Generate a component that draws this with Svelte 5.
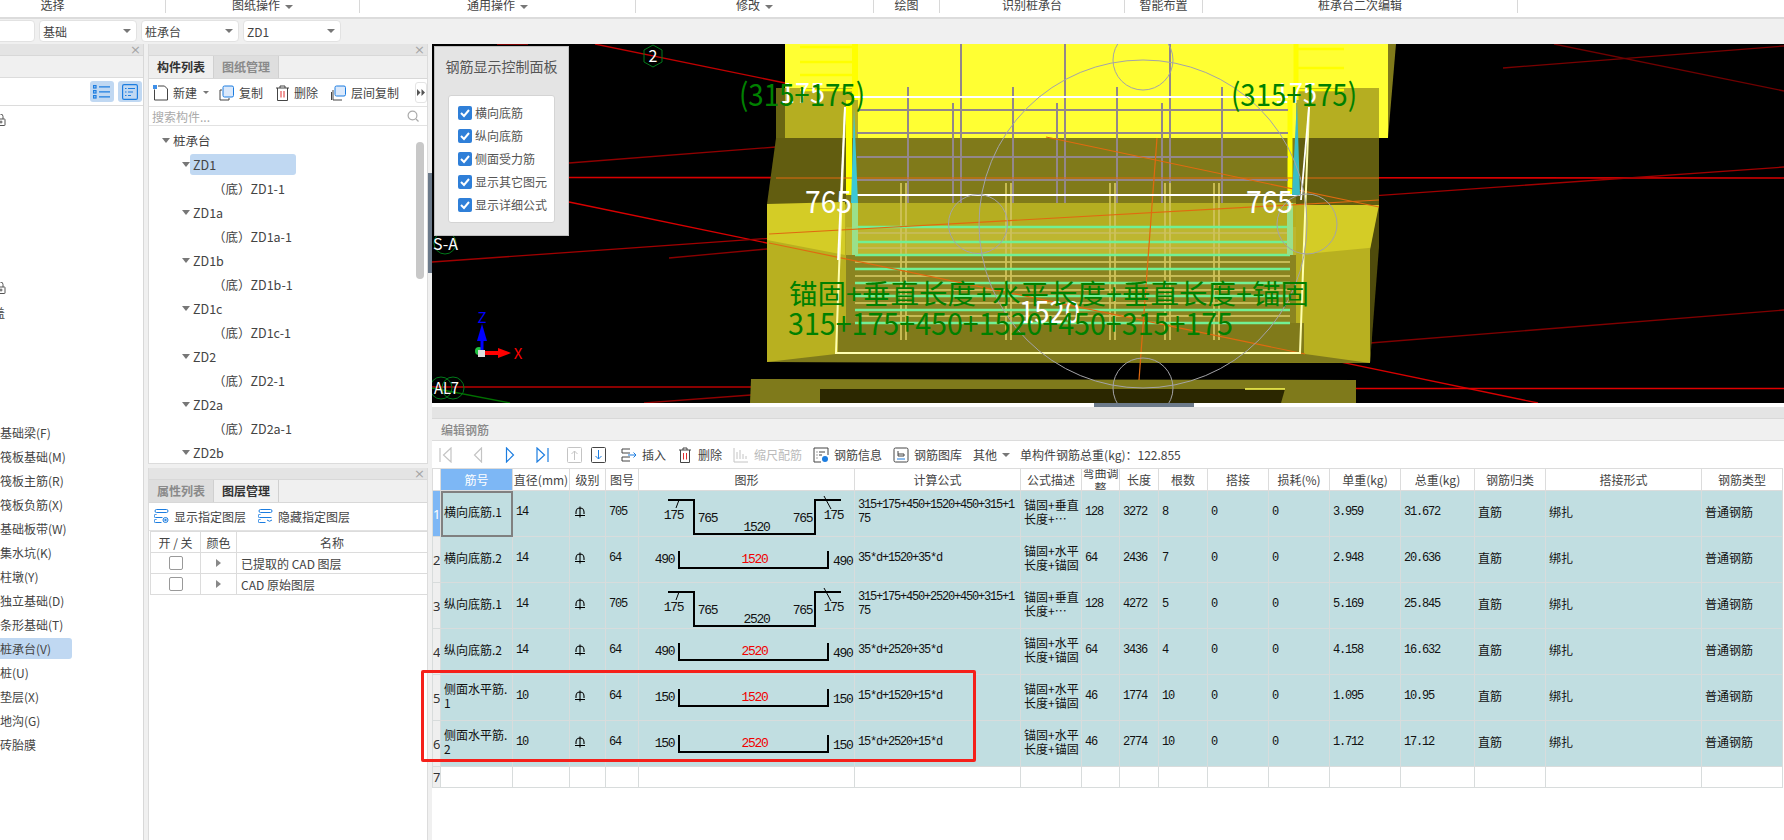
<script>
  const ribbon = [
    { label: '选择', cls: 'first' },
    { label: '图纸操作', caret: true, cls: 'w194' },
    { label: '通用操作', caret: true, cls: 'w276' },
    { label: '修改', caret: true, cls: 'w238' },
    { label: '绘图', cls: 'w66' },
    { label: '识别桩承台', cls: 'w185' },
    { label: '智能布置', cls: 'w78' },
    { label: '桩承台二次编辑', cls: 'w315' }
  ];

  // left list, one entry per row, empty rows are collapsed groups scrolled out to the left
  const navRows = [
    { lock: true }, {}, {}, {}, {}, {}, {},
    { lock: true }, { clip: '盖' }, {}, {}, {}, {},
    { text: '基础梁(F)' }, { text: '筏板基础(M)' }, { text: '筏板主筋(R)' }, { text: '筏板负筋(X)' },
    { text: '基础板带(W)' }, { text: '集水坑(K)' }, { text: '柱墩(Y)' }, { text: '独立基础(D)' },
    { text: '条形基础(T)' }, { text: '桩承台(V)', active: true }, { text: '桩(U)' }, { text: '垫层(X)' },
    { text: '地沟(G)' }, { text: '砖胎膜' }
  ];

  const treeItems = ['ZD1', 'ZD1a', 'ZD1b', 'ZD1c', 'ZD2', 'ZD2a', 'ZD2b'];

  const columns = [
    { w: 8, t: '' }, { w: 72, t: '筋号', cls: 'hd-active' }, { w: 57, t: '直径(mm)' }, { w: 36, t: '级别' }, { w: 33, t: '图号' },
    { w: 216, t: '图形' }, { w: 166, t: '计算公式' }, { w: 61, t: '公式描述' }, { w: 38, t: '弯曲调整', wrap: true },
    { w: 39, t: '长度' }, { w: 49, t: '根数' }, { w: 61, t: '搭接' }, { w: 61, t: '损耗(%)' }, { w: 71, t: '单重(kg)' },
    { w: 74, t: '总重(kg)' }, { w: 71, t: '钢筋归类' }, { w: 156, t: '搭接形式' }, { w: 81, t: '钢筋类型' }
  ];

  const rebars = [
    { name: ['横向底筋.1'], d: 14, no: 705, hook: true, mid: 1520, side: 175, formula: '315+175+450+1520+450+315+175', desc: ['锚固+垂直', '长度+…'], bend: 128, len: 3272, n: 8, unit: '3.959', total: '31.672' },
    { name: ['横向底筋.2'], d: 14, no: 64, mid: 1520, side: 490, formula: '35*d+1520+35*d', desc: ['锚固+水平', '长度+锚固'], bend: 64, len: 2436, n: 7, unit: '2.948', total: '20.636' },
    { name: ['纵向底筋.1'], d: 14, no: 705, hook: true, mid: 2520, side: 175, formula: '315+175+450+2520+450+315+175', desc: ['锚固+垂直', '长度+…'], bend: 128, len: 4272, n: 5, unit: '5.169', total: '25.845' },
    { name: ['纵向底筋.2'], d: 14, no: 64, mid: 2520, side: 490, formula: '35*d+2520+35*d', desc: ['锚固+水平', '长度+锚固'], bend: 64, len: 3436, n: 4, unit: '4.158', total: '16.632' },
    { name: ['侧面水平筋.', '1'], d: 10, no: 64, mid: 1520, side: 150, formula: '15*d+1520+15*d', desc: ['锚固+水平', '长度+锚固'], bend: 46, len: 1774, n: 10, unit: '1.095', total: '10.95' },
    { name: ['侧面水平筋.', '2'], d: 10, no: 64, mid: 2520, side: 150, formula: '15*d+2520+15*d', desc: ['锚固+水平', '长度+锚固'], bend: 46, len: 2774, n: 10, unit: '1.712', total: '17.12' }
  ];

  const checks = ['横向底筋', '纵向底筋', '侧面受力筋', '显示其它图元', '显示详细公式'];

  const rebarV = [[908, 87], [953, 103], [961, 44], [1013, 87], [1057, 103], [1065, 44], [1117, 87], [1162, 103], [1170, 44], [1222, 87]];
  const rebarH = [110, 133, 157, 180];
  const lowerV = [901, 906, 1006, 1011, 1110, 1115, 1165, 1170, 1214, 1219];
  const green = [227, 242, 255, 269, 283, 296, 310, 323];
  const tan = [233, 248, 262, 276, 290, 303, 316];
</script>

<div class="page">
  <header class="ribbon">
    {#each ribbon as r}
      <div class="rb {r.cls}">
        <span>{r.label}</span>
        {#if r.caret}<i class="caret"></i>{/if}
      </div>
    {/each}
  </header>

  <div class="combos">
    <div class="combo c0"><i class="caret"></i></div>
    <div class="combo"><span>基础</span><i class="caret"></i></div>
    <div class="combo"><span>桩承台</span><i class="caret"></i></div>
    <div class="combo"><span>ZD1</span><i class="caret"></i></div>
  </div>

  <main class="main">
    <aside class="panel nav">
      <div class="p-head"><span class="close">×</span></div>
      <div class="nav-strip"></div>
      <div class="nav-tools">
        <button class="view-btn" aria-label="列表">
          <svg width="18" height="14" viewBox="0 0 18 14" fill="none" stroke="#1c7de0" stroke-width="1.2">
            <rect x="0.6" y="0.6" width="2.4" height="2.4" /><rect x="0.6" y="5.6" width="2.4" height="2.4" /><rect x="0.6" y="10.6" width="2.4" height="2.4" />
            <path d="M6 1.8h11M6 6.8h11M6 11.8h11" />
          </svg>
        </button>
        <button class="view-btn" aria-label="详情">
          <svg width="16" height="16" viewBox="0 0 16 16" fill="none" stroke="#1c7de0" stroke-width="1.2">
            <rect x="0.6" y="0.6" width="14.8" height="14.8" rx="1.5" />
            <path d="M3 4.5h1.5M6 4.5h7M3 8h1.5M6 8h5M3 11.5h1.5M6 11.5h3" />
          </svg>
        </button>
      </div>
      <ul class="nav-list">
        {#each navRows as row}
          <li class="nav-row">
            {#if row.lock}
              <svg class="lock" width="6" height="12" viewBox="0 0 6 12" fill="none" stroke="#555" stroke-width="1">
                <path d="M-2 5V2.5a2.5 2.5 0 0 1 5 0V5" /><rect x="-4" y="5" width="9" height="6.5" rx="0.5" /><circle cx="1" cy="8" r="1" />
              </svg>
            {:else if row.clip}
              <span class="nav-clip">{row.clip}</span>
            {:else if row.text}
              <span class="nav-text" class:active={row.active}>{row.text}</span>
            {/if}
          </li>
        {/each}
      </ul>
    </aside>

    <div class="mid">
      <section class="panel comp">
        <div class="p-head"><span class="close">×</span></div>
        <div class="tabs">
          <div class="tab on">构件列表</div>
          <div class="tab">图纸管理</div>
        </div>
        <div class="tools">
          <span class="tool">
            <svg width="15" height="16" viewBox="0 0 15 16" fill="none" stroke="#444">
              <path d="M1.5 4.5v10.5h13V4l-3-3H5" />
              <rect x="0" y="0" width="4" height="4" fill="#3f8fe8" stroke="none" />
            </svg>
            新建<i class="caret new-caret"></i>
          </span>
          <span class="tool">
            <svg width="15" height="16" viewBox="0 0 15 16" fill="none">
              <path d="M3 5H1v10h9v-2" stroke="#444" />
              <rect x="4" y="1" width="10.5" height="11" rx="1.5" fill="#dbe9fb" stroke="#1c7de0" />
            </svg>
            复制
          </span>
          <span class="tool trash">
            <svg width="13" height="16" viewBox="0 0 13 16" fill="none" stroke="#444">
              <path d="M0 3h13M4 3V1h5v2M1.5 3v12.5h10V3" />
              <path d="M5 6v6.5M8 6v6.5" stroke="#e03030" />
            </svg>
            删除
          </span>
          <span class="tool">
            <svg width="15" height="16" viewBox="0 0 15 16" fill="none">
              <path d="M2 5v10h9M0.5 7v8" stroke="#444" />
              <rect x="4" y="1" width="10.5" height="10" rx="1.5" fill="#dbe9fb" stroke="#1c7de0" />
            </svg>
            层间复制
          </span>
          <span class="more">
            <svg width="8" height="7" viewBox="0 0 8 7" fill="#555"><path d="M0 0l3.500 3.500L0 7zM4.500 0L8 3.500 4.500 7z" /></svg>
          </span>
        </div>
        <div class="search">
          <span>搜索构件...</span>
          <svg width="12" height="12" viewBox="0 0 12 12" fill="none" stroke="#aaa" stroke-width="1.2">
            <circle cx="5.5" cy="5.5" r="4.4" /><path d="M9 9l2.5 2.5" />
          </svg>
        </div>
        <div class="tree">
          <div class="t-row lvl0"><i class="arrow"></i><span>桩承台</span></div>
          {#each treeItems as item, i}
            <div class="t-row lvl1"><i class="arrow"></i><span class:sel={i === 0}>{item}</span></div>
            {#if i < treeItems.length - 1}
              <div class="t-row lvl2">（底）{item}-1</div>
            {/if}
          {/each}
          <div class="scroll"></div>
        </div>
      </section>

      <section class="panel layers">
        <div class="p-head"><span class="close">×</span></div>
        <div class="tabs">
          <div class="tab">属性列表</div>
          <div class="tab on">图层管理</div>
        </div>
        <div class="tools layer-tools">
          <span class="tool">
            <svg width="15" height="15" viewBox="0 0 15 15" fill="none" stroke="#1c7de0">
              <rect x="1" y="0.5" width="13" height="3" rx="1.5" /><path d="M2.5 5.5h-1a1.5 1.5 0 0 0 0 3h7M2.5 10.500h-1a1.500 1.500 0 0 0 0 3h6" />
              <circle cx="11.500" cy="11" r="2.500" /><circle cx="11.500" cy="11" r="0.800" fill="#1c7de0" />
            </svg>
            显示指定图层
          </span>
          <span class="tool hide">
            <svg width="15" height="15" viewBox="0 0 15 15" fill="none" stroke="#1c7de0">
              <rect x="1" y="0.5" width="13" height="3" rx="1.5" /><path d="M2.5 5.5h-1a1.5 1.5 0 0 0 0 3h12M2.5 10.500h-1a1.500 1.500 0 0 0 0 3h6M9 11q2.500 2.500 5 0" />
            </svg>
            隐藏指定图层
          </span>
        </div>
        <table class="layer-table">
          <colgroup><col class="l1" /><col class="l2" /><col /></colgroup>
          <thead><tr><th>开 / 关</th><th>颜色</th><th>名称</th></tr></thead>
          <tbody>
            {#each ['已提取的 CAD 图层', 'CAD 原始图层'] as name}
              <tr>
                <td><i class="cb"></i></td>
                <td><i class="tri"></i></td>
                <td class="l-name">{name}</td>
              </tr>
            {/each}
          </tbody>
        </table>
      </section>
      <i class="split-v"></i>
    </div>

    <div class="right">
      <div class="view">
        <svg class="scene" width="1352" height="359" viewBox="432 44 1352 359">
          <rect x="432" y="44" width="1352" height="359" fill="#000" />

          <!-- grid lines behind the model -->
          <g fill="none" stroke-width="1.3">
            <path d="M595 44L785 83" stroke="#c00000" />
            <path d="M497 44L528 44" stroke="#c00000" />
            <path d="M569 163L776 147" stroke="#900000" />
            <path d="M1503 68L1784 46" stroke="#7a0000" />
            <path d="M1554 44L1784 91" stroke="#700000" />
            <path d="M569 177.500L1784 178" stroke="#d80000" stroke-width="1.600" />
            <path d="M569 202L1538 403" stroke="#d80000" />
            <path d="M432 262L1784 167" stroke="#a00000" />
            <path d="M669 258L767 249" stroke="#8a0000" />
            <path d="M1370 343L1784 310" stroke="#800000" />
            <path d="M432 387L751 387" stroke="#b80000" stroke-width="1.600" />
            <path d="M1356 388.500L1784 388.500" stroke="#e00000" stroke-width="1.600" />
            <path d="M644 403L751 395" stroke="#900000" />
            <path d="M432 388L510 403" stroke="#007000" />
          </g>

          <!-- pile cap volumes -->
          <polygon points="751,379 1356,380 1356,403 750,403" fill="#7f7a1b" />
          <polygon points="820,389 1285,389 1281,403 820,403" fill="#2b2700" />
          <path d="M1245 389H1285" stroke="#ffff55" stroke-width="1.500" fill="none" />
          <polygon points="785,44 1388,44 1388,138 785,138" fill="#ffff33" />
          <polygon points="1388,44 1396,44 1388,138" fill="#807a1a" />
          <polygon points="776,88 785,88 785,138 776,138" fill="#6a6612" />
          <polygon points="785,88 1379,88 1379,138 785,138" fill="#b5ae21" />
          <polygon points="858,44 1296,44 1296,138 858,138" fill="#ffff33" />
          <polygon points="776,138 1379,138 1379,205 767,204" fill="#625d10" />
          <polygon points="767,204 1379,205 1370,363 767,362" fill="#b8b020" />
          <polygon points="767,204 845,202 845,255 767,240" fill="#d4cc26" />
          <polygon points="1305,205 1379,205 1379,247 1305,254" fill="#d4cc26" />
          <polygon points="1379,205 1379,247 1370,363 1370,250" fill="#4f4b0c" />
          <polygon points="767,362 836,354 1305,354 1370,363" fill="#7f7a1b" />
          <rect x="846" y="138" width="450" height="65" fill="#807a1a" />
          <rect x="846" y="203" width="450" height="24" fill="#b5ae21" />
          <rect x="846" y="227" width="450" height="28" fill="#bdb630" />
          <rect x="846" y="255" width="450" height="68" fill="#8a8420" />
          <rect x="838" y="323" width="466" height="31" fill="#807a1a" />

          <!-- pure yellow hooks -->
          <g fill="none" stroke="#ffff00">
            <path d="M855 44V100" stroke-width="6" />
            <path d="M849 100V195" stroke-width="6" />
            <path d="M1296 44V100" stroke-width="5" />
            <path d="M1290 100V195" stroke-width="5" />
            <path d="M800 47H852M800 62H852M800 75H852M800 90H852" stroke-width="2.500" />
            <path d="M1296 49H1344M1296 68H1344M1296 90H1344" stroke-width="2.500" />
          </g>

          <!-- gray rebar grid -->
          <g stroke="#93878a" stroke-width="2" fill="none">
            {#each rebarH as y}
              <path d="M857 {y}H1288" />
            {/each}
            {#each rebarV as [x, top]}
              <path d="M{x} {top}V203" />
            {/each}
          </g>

          <!-- lower bars -->
          <g fill="none">
            {#each tan as y}
              <path d="M855 {y}H1290" stroke="#c5bb55" stroke-width="2" />
            {/each}
            {#each lowerV as x}
              <path d="M{x} 183V340" stroke="#cfc25a" stroke-width="1.800" />
            {/each}
            {#each green as y}
              <path d="M855 {y}H1290" stroke="#72f094" stroke-width="2.500" />
            {/each}
            <path d="M855 203V255" stroke="#9ae08a" stroke-width="6" />
            <path d="M1290 203V255" stroke="#9ae08a" stroke-width="6" />
          </g>

          <!-- orange where the axes cross the model -->
          <g fill="none" stroke="#e06a10" stroke-width="1.200">
            <path d="M1046 137L1379 207" />
            <path d="M769 243L1305 354" />
            <path d="M769 234L1379 200" />
            <path d="M776 178H1379" />
            <path d="M1157 138L1139 380" />
          </g>

          <!-- white frame -->
          <path d="M845 107L836 353H1300L1309 107" fill="none" stroke="#ffffb0" stroke-width="2" />
          <g fill="none" stroke="#fff" stroke-width="1.800">
            <path d="M854 97H1288" />
            <path d="M852 195H1300" />
            <path d="M845 107L838 260" />
            <path d="M1309 107L1301 200" />
          </g>
          <path d="M854 107L858 203H851Z" fill="#3cc8d4" />
          <path d="M1297 100L1300 195H1292Z" fill="#3cbcc4" />

          <!-- column circles -->
          <g fill="none" stroke="#a3a3a8" stroke-width="1">
            <circle cx="1143" cy="224" r="164" />
            <circle cx="1143" cy="60" r="30" />
            <circle cx="1143" cy="388" r="30" />
            <circle cx="978" cy="224" r="29.500" />
            <circle cx="1307" cy="224" r="30" />
          </g>

          <!-- axis labels -->
          <g fill="none" stroke="#007a1a">
            <polygon points="653,45 662,50 662,62 653,67 644,62 644,50" />
            <circle cx="445" cy="243" r="11" />
            <circle cx="441" cy="388" r="11" />
            <circle cx="453" cy="388" r="11" />
          </g>
          <text class="axis" x="653" y="62" text-anchor="middle">2</text>
          <text class="axis" x="433" y="250">S-A</text>
          <text class="axis" x="434" y="394" textLength="25" lengthAdjust="spacingAndGlyphs">AL7</text>

          <!-- gizmo -->
          <circle cx="479" cy="351" r="4" fill="#20c040" />
          <path d="M482 351V331" stroke="#0000ff" stroke-width="3" fill="none" />
          <polygon points="482,324 487,341 477,341" fill="#0000ff" />
          <path d="M484 353H500" stroke="#ff0000" stroke-width="4" fill="none" />
          <polygon points="511,353 498,348 498,358" fill="#ff0000" />
          <rect x="478" y="350" width="7" height="7" fill="#ddd" />
          <text class="gz" x="482" y="323" fill="#0000ff" text-anchor="middle">Z</text>
          <text class="gz" x="518" y="359" fill="#ff0000" text-anchor="middle">X</text>

          <!-- dimension text -->
          <g class="w-dim">
            <text x="780" y="103" textLength="45" lengthAdjust="spacingAndGlyphs">175</text>
            <text x="1275" y="103" textLength="42" lengthAdjust="spacingAndGlyphs">175</text>
            <text class="big" x="805" y="213" textLength="47" lengthAdjust="spacingAndGlyphs">765</text>
            <text class="big" x="1246" y="213" textLength="47" lengthAdjust="spacingAndGlyphs">765</text>
            <text class="big" x="1019" y="323" textLength="61" lengthAdjust="spacingAndGlyphs">1520</text>
          </g>
          <g class="g-dim">
            <text class="g-num" x="739" y="106" textLength="126" lengthAdjust="spacingAndGlyphs">(315+175)</text>
            <text class="g-num" x="1231" y="106" textLength="126" lengthAdjust="spacingAndGlyphs">(315+175)</text>
            <text x="789" y="304" textLength="520" lengthAdjust="spacingAndGlyphs">锚固+垂直长度+水平长度+垂直长度+锚固</text>
            <text class="g-num" x="788" y="335" textLength="445" lengthAdjust="spacingAndGlyphs">315+175+450+1520+450+315+175</text>
          </g>
        </svg>

        <div class="ctl">
          <div class="ctl-title">钢筋显示控制面板</div>
          <div class="ctl-box">
            {#each checks as c}
              <label class="ctl-row">
                <svg width="14" height="14" viewBox="0 0 14 14">
                  <rect width="14" height="14" rx="2" fill="#2f7fd8" />
                  <path d="M3 7l3 3 5-6" fill="none" stroke="#fff" stroke-width="2" />
                </svg>
                {c}
              </label>
            {/each}
          </div>
        </div>
        <i class="split-h"></i>
      </div>

      <section class="editor">
        <div class="ed-band"></div>
        <div class="ed-title">编辑钢筋</div>
        <div class="ed-tools">
          <span class="nv first-nv">
            <svg width="14" height="16" viewBox="0 0 14 16" fill="none" stroke="#c4c4c4" stroke-width="1.200"><path d="M1 1v14M12 1L4.500 8 12 15z" /></svg>
          </span>
          <span class="nv">
            <svg width="10" height="16" viewBox="0 0 10 16" fill="none" stroke="#c4c4c4" stroke-width="1.200"><path d="M8.500 1L1.500 8l7 7z" /></svg>
          </span>
          <span class="nv">
            <svg width="10" height="16" viewBox="0 0 10 16" fill="none" stroke="#1c7de0" stroke-width="1.200"><path d="M1.500 1l7 7-7 7z" /></svg>
          </span>
          <span class="nv">
            <svg width="14" height="16" viewBox="0 0 14 16" fill="none" stroke="#1c7de0" stroke-width="1.200"><path d="M13 1v14M2 1l7.500 7L2 15z" /></svg>
          </span>
          <span class="nv">
            <svg width="15" height="16" viewBox="0 0 15 16" fill="none" stroke="#c4c4c4"><rect x="0.500" y="0.500" width="14" height="15" rx="1" /><path d="M7.500 13V4M4.500 7l3-3 3 3" /></svg>
          </span>
          <span class="nv dn">
            <svg width="15" height="16" viewBox="0 0 15 16" fill="none"><rect x="0.500" y="0.500" width="14" height="15" rx="1" stroke="#444" /><path d="M7.500 3v9M4.500 9l3 3 3-3" stroke="#1c7de0" /></svg>
          </span>
          <span class="et ins">
            <svg width="16" height="14" viewBox="0 0 16 14" fill="none" stroke="#444"><path d="M9 1H1v4h8M9 9H1v4h8" /><path d="M7 7h8M12.500 4.500L15 7l-2.500 2.500" stroke="#1c7de0" /></svg>
            插入
          </span>
          <span class="et">
            <svg width="16" height="16" viewBox="0 0 16 16" fill="none" stroke="#444"><path d="M2 3h12M6 3V1h4v2M3.500 3v12.500h9V3" /><path d="M6.500 6v6.500M9.500 6v6.500" stroke="#e03030" /></svg>
            删除
          </span>
          <span class="et off">
            <svg width="16" height="16" viewBox="0 0 16 16" fill="none" stroke="#c4c4c4"><path d="M1 1v14h14M4 5v7M7 3v9M10 7v5M13 9v3" /></svg>
            缩尺配筋
          </span>
          <span class="et">
            <svg width="16" height="16" viewBox="0 0 16 16" fill="none" stroke="#444"><path d="M15 8V1H1v14h7" /><path d="M3.500 5h1M6 5h6M3.500 8h1M6 8h3M3.500 11h1" /><circle cx="12" cy="12" r="3" fill="#1c7de0" stroke="none" /></svg>
            钢筋信息
          </span>
          <span class="et">
            <svg width="16" height="16" viewBox="0 0 16 16" fill="none" stroke="#444"><rect x="1" y="1" width="14" height="14" rx="1.500" /><path d="M5 4v5h6v-2H5" /><path d="M4 12h8" stroke="#1c7de0" /></svg>
            钢筋图库
          </span>
          <span class="et other">其他<i class="caret"></i></span>
          <span class="weight">单构件钢筋总重(kg)：122.855</span>
        </div>

        <table class="grid">
          <colgroup>
            {#each columns as c}<col width={c.w} />{/each}
          </colgroup>
          <thead>
            <tr>
              {#each columns as c}
                <th class={c.cls}><div class="th-in" class:wrap={c.wrap}>{c.t}</div></th>
              {/each}
            </tr>
          </thead>
          <tbody>
            {#each rebars as r, i}
              <tr class="data">
                <td class="rn" class:cur={i === 0}>{i + 1}</td>
                <td class="txt" class:edit={i === 0}>
                  {#each r.name as line}<div>{line}</div>{/each}
                </td>
                <td class="num">{r.d}</td>
                <td class="lv">
                  <svg width="10" height="12" viewBox="0 0 10 12" fill="none" stroke="#000" stroke-width="1.100">
                    <path d="M1 8V6a4 4 0 0 1 8 0v2M0 9.500h10M5 0.500v11" />
                  </svg>
                </td>
                <td class="num">{r.no}</td>
                <td class="shape">
                  <svg width="216" height="45" viewBox="0 0 216 45">
                    {#if r.hook}
                      <path d="M29 9H55V43H176V9H202" fill="none" stroke="#000" stroke-width="2" />
                      <path d="M40 9L37 17M185 5L192 18" fill="none" stroke="#000" />
                      <text x="34.500" y="28" text-anchor="middle">{r.side}</text>
                      <text x="68.500" y="31" text-anchor="middle">765</text>
                      <text x="117.500" y="40" text-anchor="middle">{r.mid}</text>
                      <text x="163.500" y="31" text-anchor="middle">765</text>
                      <text x="194.600" y="28" text-anchor="middle">{r.side}</text>
                    {:else}
                      <path d="M40 14V31H189V14" fill="none" stroke="#000" stroke-width="2" />
                      <text x="25.400" y="26" text-anchor="middle">{r.side}</text>
                      <text class="red" x="115.400" y="26" text-anchor="middle">{r.mid}</text>
                      <text x="203.700" y="28" text-anchor="middle">{r.side}</text>
                    {/if}
                  </svg>
                </td>
                <td class="num formula">{r.formula}</td>
                <td class="txt">{#each r.desc as line}<div>{line}</div>{/each}</td>
                <td class="num">{r.bend}</td>
                <td class="num">{r.len}</td>
                <td class="num">{r.n}</td>
                <td class="num">0</td>
                <td class="num">0</td>
                <td class="num">{r.unit}</td>
                <td class="num">{r.total}</td>
                <td class="txt">直筋</td>
                <td class="txt">绑扎</td>
                <td class="txt">普通钢筋</td>
              </tr>
            {/each}
            <tr class="blank">
              <td class="rn">7</td>
              {#each columns.slice(1) as _}<td></td>{/each}
            </tr>
          </tbody>
        </table>
      </section>
    </div>
  </main>

  <div class="mark"></div>
</div>

<style>
  :global(body) {
    margin: 0;
    background: #f0f0f0;
  }
  .page {
    position: relative;
    width: 1784px;
    height: 840px;
    overflow: hidden;
    background: #f0f0f0;
    font: 12px "Noto Sans CJK SC", "Noto Sans", sans-serif;
    color: #333;
  }
  i {
    display: block;
    font-style: normal;
  }
  .caret {
    width: 0;
    height: 0;
    border: 4px solid transparent;
    border-top: 4px solid #777;
    border-bottom: 0;
  }

  /* ribbon */
  .ribbon {
    display: flex;
    height: 17px;
    background: #fff;
    border-bottom: 2px solid #dcdcdc;
    overflow: hidden;
  }
  .rb {
    display: flex;
    justify-content: center;
    align-items: center;
    gap: 5px;
    height: 13px;
    box-sizing: border-box;
    border-right: 1px solid #d8d8d8;
    line-height: 11px;
    color: #444;
  }
  .rb span {
    position: relative;
    top: -2px;
  }
  .first { width: 166px; padding-right: 60px; }
  .w194 { width: 194px; }
  .w276 { width: 276px; }
  .w238 { width: 238px; }
  .w66 { width: 66px; }
  .w185 { width: 185px; }
  .w78 { width: 78px; }
  .w315 { width: 315px; }

  /* combo row */
  .combos {
    display: flex;
    gap: 4px;
    height: 22px;
    padding-top: 1px;
    margin-bottom: 2px;
    margin-left: -63px;
  }
  .combo {
    display: flex;
    align-items: center;
    justify-content: space-between;
    width: 98px;
    box-sizing: border-box;
    height: 22px;
    padding: 0 5px 0 3px;
    background: #fff;
    border: 1px solid #e2e2e2;
    border-radius: 4px;
    font-size: 12px;
    color: #444;
  }

  /* main area */
  .main {
    display: flex;
    height: 796px;
  }
  .panel {
    background: #fff;
    box-sizing: border-box;
  }
  .nav {
    width: 144px;
    flex: none;
    border-right: 1px solid #d8d8d8;
    overflow: hidden;
  }
  .p-head {
    display: flex;
    justify-content: flex-end;
    align-items: center;
    height: 11px;
    padding-right: 2px;
    background: #e4e4e4;
    border-bottom: 1px solid #d8d8d8;
  }
  .close {
    color: #a5a5a5;
    font: 13px/11px "DejaVu Sans", sans-serif;
  }
  .nav-strip {
    height: 21px;
    background: #f0f0f0;
    border-bottom: 1px solid #dcdcdc;
  }
  .nav-tools {
    display: flex;
    justify-content: flex-end;
    align-items: center;
    gap: 4px;
    height: 27px;
    padding-right: 1px;
    border-bottom: 1px solid #dcdcdc;
  }
  .view-btn {
    display: flex;
    align-items: center;
    justify-content: center;
    width: 24px;
    height: 21px;
    padding: 0;
    background: #c0d8f2;
    border: 0;
    border-radius: 3px;
  }
  .nav-list {
    margin: 0;
    padding: 2px 0 0;
    list-style: none;
  }
  .nav-row {
    display: flex;
    align-items: center;
    height: 24px;
    white-space: nowrap;
    font-size: 12px;
    color: #444;
  }
  .nav-text {
    display: block;
    line-height: 21px;
  }
  .nav-text.active {
    width: 72px;
    background: #c0d8f2;
    border-radius: 0 3px 3px 0;
  }
  .nav-clip {
    margin-left: -7px;
  }

  .mid {
    position: relative;
    display: flex;
    flex-direction: column;
    gap: 4px;
    width: 280px;
    margin: 0 4px;
    flex: none;
  }
  .comp {
    height: 420px;
    border: 1px solid #dcdcdc;
    border-top: 0;
  }
  .layers {
    flex: 1;
    border: 1px solid #dcdcdc;
    border-top: 0;
    border-bottom: 0;
  }
  .tabs {
    display: flex;
    height: 22px;
    background: #f0f0f0;
    border-bottom: 1px solid #d8d8d8;
  }
  .tab {
    width: 65px;
    box-sizing: border-box;
    text-align: center;
    line-height: 22px;
    background: #dedede;
    color: #8a8a8a;
    border-right: 1px solid #d0d0d0;
    font-weight: 700;
  }
  .tab.on {
    background: #efefef;
    color: #333;
  }
  .tools {
    display: flex;
    align-items: center;
    height: 27px;
    padding-left: 4px;
    border-bottom: 1px solid #e2e2e2;
    color: #444;
  }
  .tool {
    display: flex;
    align-items: center;
    gap: 5px;
    margin-right: 13px;
    white-space: nowrap;
  }
  .new-caret {
    margin-left: 1px;
    margin-right: -3px;
    border-width: 3px;
    border-top-width: 3px;
    border-bottom-width: 0;
  }
  .more {
    display: flex;
    align-items: center;
    justify-content: center;
    width: 10px;
    height: 19px;
    margin-left: 3px;
    background: #fff;
    border: 1px solid #e4e4e4;
    border-radius: 3px;
    overflow: hidden;
  }
  .search {
    display: flex;
    align-items: center;
    justify-content: space-between;
    height: 18px;
    padding: 0 8px 0 3px;
    border-bottom: 1px solid #e2e2e2;
    color: #aaa;
  }
  .tree {
    position: relative;
    height: 337px;
    padding-top: 2px;
    box-sizing: border-box;
    overflow: hidden;
    color: #444;
  }
  .t-row {
    display: flex;
    align-items: center;
    height: 24px;
    white-space: nowrap;
    font-size: 12.500px;
  }
  .arrow {
    width: 0;
    height: 0;
    border: 4px solid transparent;
    border-top: 5px solid #777;
    border-bottom: 0;
    margin-top: 1px;
  }
  .lvl0 { padding-left: 13px; gap: 3px; }
  .lvl1 { padding-left: 33px; gap: 0; }
  .lvl1 span {
    padding: 0 0 0 3px;
    line-height: 21px;
    border-radius: 3px;
  }
  .lvl1 span.sel {
    width: 103px;
    background: #c0d8f2;
    margin-left: 0;
  }
  .lvl2 { padding-left: 64px; }
  .scroll {
    position: absolute;
    left: 267px;
    top: 16px;
    width: 8px;
    height: 137px;
    background: #c8c8c8;
    border-radius: 4px;
  }
  .layer-tools {
    padding-left: 5px;
  }
  .layer-tools .tool {
    margin-right: 12px;
  }
  .layer-table {
    width: 278px;
    table-layout: fixed;
    border-collapse: collapse;
    margin-left: 1px;
    color: #444;
  }
  .l1 { width: 50px; }
  .l2 { width: 36px; }
  .layer-table th,
  .layer-table td {
    height: 20px;
    padding: 0;
    border: 1px solid #dcdcdc;
    font-weight: 400;
    text-align: center;
  }
  .layer-table .l-name {
    text-align: left;
    padding-left: 4px;
  }
  .cb {
    width: 12px;
    height: 12px;
    margin: auto;
    border: 1px solid #999;
    border-radius: 2px;
  }
  .tri {
    width: 0;
    height: 0;
    margin: auto;
    border: 4px solid transparent;
    border-left: 5px solid #888;
    border-right: 0;
  }
  .split-v {
    position: absolute;
    right: -4px;
    top: 129px;
    width: 4px;
    height: 100px;
    background: #6c7a8a;
  }

  /* 3d view */
  .right {
    flex: 1;
    min-width: 0;
    background: #fff;
  }
  .view {
    position: relative;
    height: 359px;
  }
  .scene {
    display: block;
  }
  .scene text {
    font-family: "Noto Sans CJK SC", sans-serif;
  }
  .scene .axis {
    fill: #fff;
    font-size: 16px;
  }
  .scene .gz {
    font-size: 15px;
  }
  .w-dim text {
    fill: #fff;
    font-size: 28px;
  }
  .w-dim .big {
    font-size: 31px;
  }
  .g-dim text {
    fill: #008000;
    font-size: 27px;
  }
  .g-dim .g-num {
    font-size: 31px;
  }
  .ctl {
    position: absolute;
    left: 2px;
    top: 2px;
    width: 135px;
    height: 190px;
    box-sizing: border-box;
    padding: 9px 13px 0;
    background: #e4e4e4;
    border: 1px solid #c0c0c0;
  }
  .ctl-title {
    font-size: 14px;
    line-height: 20px;
    text-align: center;
    color: #555;
    white-space: nowrap;
    margin: 0 -3px 19px;
  }
  .ctl-box {
    height: 128px;
    box-sizing: border-box;
    padding: 5px 0 0 9px;
    background: #fff;
    border: 1px solid #d4d4d4;
    border-radius: 3px;
  }
  .ctl-row {
    display: flex;
    align-items: center;
    gap: 3px;
    height: 23px;
    white-space: nowrap;
    font-size: 12px;
    color: #555;
  }
  .split-h {
    position: absolute;
    left: 662px;
    bottom: -4px;
    width: 100px;
    height: 4px;
    background: #6c7a8a;
  }

  /* editor */
  .editor {
    margin-top: 4px;
  }
  .ed-band {
    height: 11px;
    background: #e4e4e4;
    border-bottom: 1px solid #d8d8d8;
  }
  .ed-title {
    height: 21px;
    padding-left: 9px;
    line-height: 21px;
    background: #f0f0f0;
    border-bottom: 1px solid #dcdcdc;
    color: #888;
    font-weight: 500;
  }
  .ed-tools {
    display: flex;
    align-items: center;
    height: 27px;
    color: #444;
  }
  .nv {
    display: flex;
    justify-content: center;
    width: 32px;
    flex: none;
  }
  .first-nv {
    margin-left: -2px;
  }
  .nv.dn {
    width: 27px;
    margin-left: -5px;
  }
  .et {
    display: flex;
    align-items: center;
    gap: 5px;
    margin-left: 11px;
    white-space: nowrap;
  }
  .et.ins {
    margin-left: 9px;
  }
  .et.off {
    color: #bbb;
  }
  .weight {
    margin-left: 10px;
    white-space: nowrap;
  }
  .other {
    gap: 5px;
  }

  .grid {
    width: 1350px;
    table-layout: fixed;
    border-collapse: collapse;
    background: #fff;
  }
  .grid th {
    height: 21px;
    padding: 0;
    border: 1px solid #dcdcdc;
    font-weight: 400;
    color: #444;
  }
  .th-in {
    display: flex;
    align-items: center;
    justify-content: center;
    height: 21px;
    overflow: hidden;
    white-space: nowrap;
    line-height: 15px;
  }
  .th-in.wrap {
    white-space: normal;
    text-align: center;
  }
  .hd-active {
    background: #7db7f5;
    color: #fff !important;
  }
  .grid td {
    border: 1px solid #d8dcdc;
    padding: 0 3px 3px;
    overflow: hidden;
  }
  .grid .data td {
    height: 42px;
    background: #c1dee1;
    color: #111;
    line-height: 14px;
  }
  .grid .data .rn,
  .grid .blank .rn {
    padding: 0;
    background: #efefef;
    color: #333;
    font: 13px "Noto Sans", sans-serif;
    text-align: center;
  }
  .grid .data .rn.cur {
    background: #7db7f5;
    color: #fff;
  }
  .grid .blank td {
    height: 20px;
    padding: 0;
  }
  .num {
    font-family: "Liberation Mono", monospace;
    font-size: 12px;
    letter-spacing: -1.200px;
    word-break: break-all;
  }
  .formula {
    padding-bottom: 4px;
  }
  .txt {
    white-space: nowrap;
  }
  .grid .data td.edit {
    outline: 2px solid #808080;
    outline-offset: -2px;
  }
  .grid .data td.shape {
    padding: 0;
    vertical-align: top;
  }
  .shape svg {
    display: block;
  }
  .shape text {
    font-family: "Liberation Mono", monospace;
    font-size: 13px;
    letter-spacing: -1.300px;
    fill: #111;
  }
  .shape text.red {
    fill: #f00000;
  }
  .lv svg {
    display: block;
    margin-left: 2px;
  }

  .mark {
    position: absolute;
    left: 421px;
    top: 670px;
    width: 555px;
    height: 92px;
    box-sizing: border-box;
    border: 3px solid #f5201a;
    border-radius: 2px;
  }
</style>
